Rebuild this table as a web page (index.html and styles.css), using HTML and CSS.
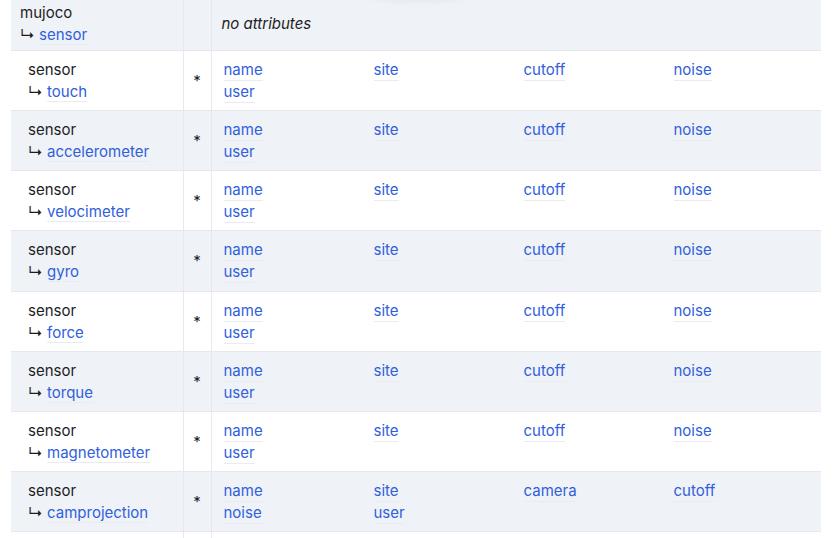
FILE: index.html
```html
<!DOCTYPE html>
<html>
<head>
<meta charset="utf-8">
<link rel="stylesheet" href="styles.css">
</head>
<body>
<div class="page">
  <div class="shadow"></div>
  <table class="schema">
    <colgroup><col class="c-elem"><col class="c-req"><col class="c-attrs"></colgroup>
    <tr class="row striped head">
      <td class="elem top"><div>mujoco</div><div><span class="arrow">↳</span> <a>sensor</a></div></td>
      <td class="req"></td>
      <td class="attrs"><i>no attributes</i></td>
    </tr>
    <tr class="row">
      <td class="elem"><div>sensor</div><div><span class="arrow">↳</span> <a>touch</a></div></td>
      <td class="req">*</td>
      <td class="attrs"><div class="grid"><a>name</a><a>site</a><a>cutoff</a><a>noise</a><a>user</a></div></td>
    </tr>
    <tr class="row striped">
      <td class="elem"><div>sensor</div><div><span class="arrow">↳</span> <a>accelerometer</a></div></td>
      <td class="req">*</td>
      <td class="attrs"><div class="grid"><a>name</a><a>site</a><a>cutoff</a><a>noise</a><a>user</a></div></td>
    </tr>
    <tr class="row">
      <td class="elem"><div>sensor</div><div><span class="arrow">↳</span> <a>velocimeter</a></div></td>
      <td class="req">*</td>
      <td class="attrs"><div class="grid"><a>name</a><a>site</a><a>cutoff</a><a>noise</a><a>user</a></div></td>
    </tr>
    <tr class="row striped">
      <td class="elem"><div>sensor</div><div><span class="arrow">↳</span> <a>gyro</a></div></td>
      <td class="req">*</td>
      <td class="attrs"><div class="grid"><a>name</a><a>site</a><a>cutoff</a><a>noise</a><a>user</a></div></td>
    </tr>
    <tr class="row">
      <td class="elem"><div>sensor</div><div><span class="arrow">↳</span> <a>force</a></div></td>
      <td class="req">*</td>
      <td class="attrs"><div class="grid"><a>name</a><a>site</a><a>cutoff</a><a>noise</a><a>user</a></div></td>
    </tr>
    <tr class="row striped">
      <td class="elem"><div>sensor</div><div><span class="arrow">↳</span> <a>torque</a></div></td>
      <td class="req">*</td>
      <td class="attrs"><div class="grid"><a>name</a><a>site</a><a>cutoff</a><a>noise</a><a>user</a></div></td>
    </tr>
    <tr class="row">
      <td class="elem"><div>sensor</div><div><span class="arrow">↳</span> <a>magnetometer</a></div></td>
      <td class="req">*</td>
      <td class="attrs"><div class="grid"><a>name</a><a>site</a><a>cutoff</a><a>noise</a><a>user</a></div></td>
    </tr>
    <tr class="row striped">
      <td class="elem"><div>sensor</div><div><span class="arrow">↳</span> <a>camprojection</a></div></td>
      <td class="req">*</td>
      <td class="attrs"><div class="grid"><a>name</a><a>site</a><a>camera</a><a>cutoff</a><a>noise</a><a>user</a></div></td>
    </tr>
    <tr class="row tail">
      <td class="elem"></td>
      <td class="req"></td>
      <td class="attrs"></td>
    </tr>
  </table>
</div>
</body>
</html>
```
FILE: styles.css
```css
html, body {
  margin: 0;
  padding: 0;
  background: #ffffff;
  overflow: hidden;
}
body {
  font-family: Inter, "Noto Sans", sans-serif;
  font-size: 15px;
  line-height: 22px;
  color: #1c1d1f;
}
.page {
  position: relative;
  padding: 0 18px 0 11px;
  margin-top: -5px;
}
.shadow {
  position: absolute;
  left: 370px;
  top: -9px;
  width: 95px;
  height: 12px;
  border-radius: 50%;
  background: #eef1f5;
  box-shadow: 0 2px 8px rgba(0, 0, 0, 0.07);
  z-index: 2;
}
.schema {
  width: 810px;
  border-collapse: collapse;
  table-layout: fixed;
}
.c-elem { width: 172px; }
.c-req { width: 28px; }
.c-attrs { width: 610px; }
.row td {
  border: 1px solid #e6e8ec;
  vertical-align: middle;
  padding: 8px 0 7.125px;
  box-sizing: border-box;
  height: 58.125px;
}
.row.head td { height: 54px; padding: 7px 0 4px; }
.row.tail td { height: 40px; }
.row:first-child td { border-top: none; }
.schema .row td:first-child { border-left: none; }
.schema .row td:last-child { border-right: none; }
.striped td { background: #eff2f6; }
.elem { padding-left: 17px !important; }
.elem.top { padding-left: 9px !important; }
.req { text-align: center; }
.attrs { padding-left: 10px !important; }
a {
  color: #3060dc;
  text-decoration: none;
  border-bottom: 1px solid #e8ebf1;
}
.arrow { color: #1c1d1f; }
i { font-style: italic; }
.grid {
  display: grid;
  grid-template-columns: repeat(4, 150px);
  padding-left: 2px;
}
.grid a {
  justify-self: start;
  line-height: 21px;
}
```
